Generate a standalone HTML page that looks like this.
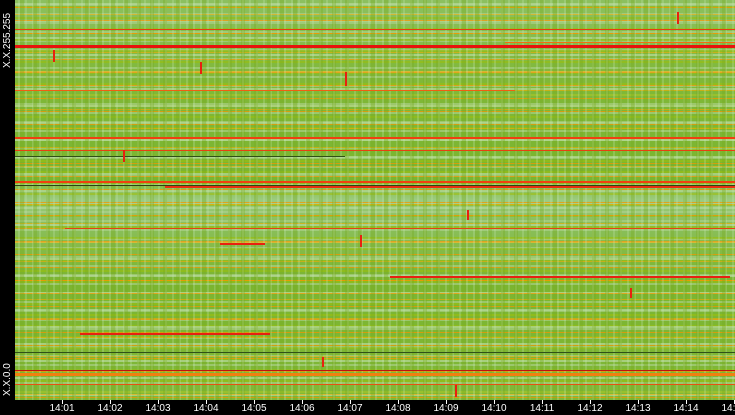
<!DOCTYPE html><html><head><style>
body{margin:0;width:735px;height:415px;background:#000;position:relative;overflow:hidden;font-family:"Liberation Sans",sans-serif}
#p{position:absolute;left:15px;top:0;width:720px;height:400px;background:
repeating-linear-gradient(90deg,transparent 0 5px,rgba(120,170,30,.35) 5px 9px,transparent 9px 13px),
repeating-linear-gradient(90deg,transparent 0 3px,rgba(200,230,180,.25) 3px 5px,transparent 5px 7px),
repeating-linear-gradient(180deg,transparent 0 7px,rgba(240,150,0,.75) 7px 8px,transparent 8px 13px),
repeating-linear-gradient(180deg,transparent 0 14px,rgba(245,170,0,.6) 14px 15px,transparent 15px 19px),
repeating-linear-gradient(180deg,transparent 0 3px,rgba(180,215,150,.75) 3px 5px,transparent 5px 17px),
repeating-linear-gradient(180deg,transparent 0 6px,rgba(150,190,20,.7) 6px 8px,transparent 8px 11px),
repeating-linear-gradient(180deg,transparent 0 4px,rgba(175,210,145,.6) 4px 6px,transparent 6px 9px),
linear-gradient(180deg,#8cc060 0,#80b838 20%,#7bb530 45%,#9ccc80 50%,#8cc060 55%,#7bb530 70%,#80b838 100%)}
.l{position:absolute;height:1px}
.t{position:absolute;top:403px;color:#fff;font-size:10px;transform:translateX(-50%)}
.k{position:absolute;top:400px;width:1px;height:4px;background:#fff}
.y{position:absolute;color:#fff;font-size:10px;transform:rotate(-90deg);transform-origin:left top;left:2px}
</style></head><body>
<div id="p">
<div class="l" style="top:29px;left:0;width:720px;background:#e83a10"></div>
<div class="l" style="top:45px;left:0;width:720px;height:3px;background:#e8120c"></div>
<div class="l" style="top:42px;left:490px;width:230px;background:#f07010"></div>
<div class="l" style="top:90px;left:0;width:500px;background:#f06010"></div>
<div class="l" style="top:137px;left:0;width:720px;height:2px;background:#f04010"></div>
<div class="l" style="top:150px;left:0;width:720px;background:#e84010"></div>
<div class="l" style="top:156px;left:0;width:330px;background:#305018"></div>
<div class="l" style="top:181px;left:0;width:720px;height:2px;background:#f04010"></div>
<div class="l" style="top:185px;left:0;width:720px;background:#304010"></div>
<div class="l" style="top:186px;left:150px;width:570px;height:2px;background:#e83010"></div>
<div class="l" style="top:228px;left:50px;width:670px;background:#e84010"></div>
<div class="l" style="top:243px;left:205px;width:45px;height:2px;background:#e82010"></div>
<div class="l" style="top:276px;left:375px;width:340px;height:2px;background:#e82010"></div>
<div class="l" style="top:333px;left:65px;width:190px;height:2px;background:#e82010"></div>
<div class="l" style="top:352px;left:0;width:720px;background:#305018"></div>
<div class="l" style="top:370px;left:0;width:720px;background:#c01010"></div>
<div class="l" style="top:373px;left:0;width:720px;height:3px;background:#f08010"></div>
<div class="l" style="top:384px;left:0;width:720px;background:#e85010"></div>
<div class="l" style="top:50px;left:38px;width:2px;height:12px;background:#e82010"></div>
<div class="l" style="top:150px;left:108px;width:2px;height:12px;background:#e82010"></div>
<div class="l" style="top:357px;left:307px;width:2px;height:10px;background:#e82010"></div>
<div class="l" style="top:210px;left:452px;width:2px;height:10px;background:#e82010"></div>
<div class="l" style="top:12px;left:662px;width:2px;height:12px;background:#e82010"></div>
<div class="l" style="top:62px;left:185px;width:2px;height:12px;background:#e82010"></div>
<div class="l" style="top:72px;left:330px;width:2px;height:14px;background:#e82010"></div>
<div class="l" style="top:235px;left:345px;width:2px;height:12px;background:#e82010"></div>
<div class="l" style="top:385px;left:440px;width:2px;height:12px;background:#e82010"></div>
<div class="l" style="top:288px;left:615px;width:2px;height:10px;background:#e82010"></div>
</div>
<div class="y" style="top:68px">X.X.255.255</div>
<div class="y" style="top:396px">X.X.0.0</div>
<div class="k" style="left:62px"></div><div class="t" style="left:62px">14:01</div>
<div class="k" style="left:110px"></div><div class="t" style="left:110px">14:02</div>
<div class="k" style="left:158px"></div><div class="t" style="left:158px">14:03</div>
<div class="k" style="left:206px"></div><div class="t" style="left:206px">14:04</div>
<div class="k" style="left:254px"></div><div class="t" style="left:254px">14:05</div>
<div class="k" style="left:302px"></div><div class="t" style="left:302px">14:06</div>
<div class="k" style="left:350px"></div><div class="t" style="left:350px">14:07</div>
<div class="k" style="left:398px"></div><div class="t" style="left:398px">14:08</div>
<div class="k" style="left:446px"></div><div class="t" style="left:446px">14:09</div>
<div class="k" style="left:494px"></div><div class="t" style="left:494px">14:10</div>
<div class="k" style="left:542px"></div><div class="t" style="left:542px">14:11</div>
<div class="k" style="left:590px"></div><div class="t" style="left:590px">14:12</div>
<div class="k" style="left:638px"></div><div class="t" style="left:638px">14:13</div>
<div class="k" style="left:686px"></div><div class="t" style="left:686px">14:14</div>
<div class="k" style="left:734px"></div><div class="t" style="left:734px">14:15</div>
</body></html>
